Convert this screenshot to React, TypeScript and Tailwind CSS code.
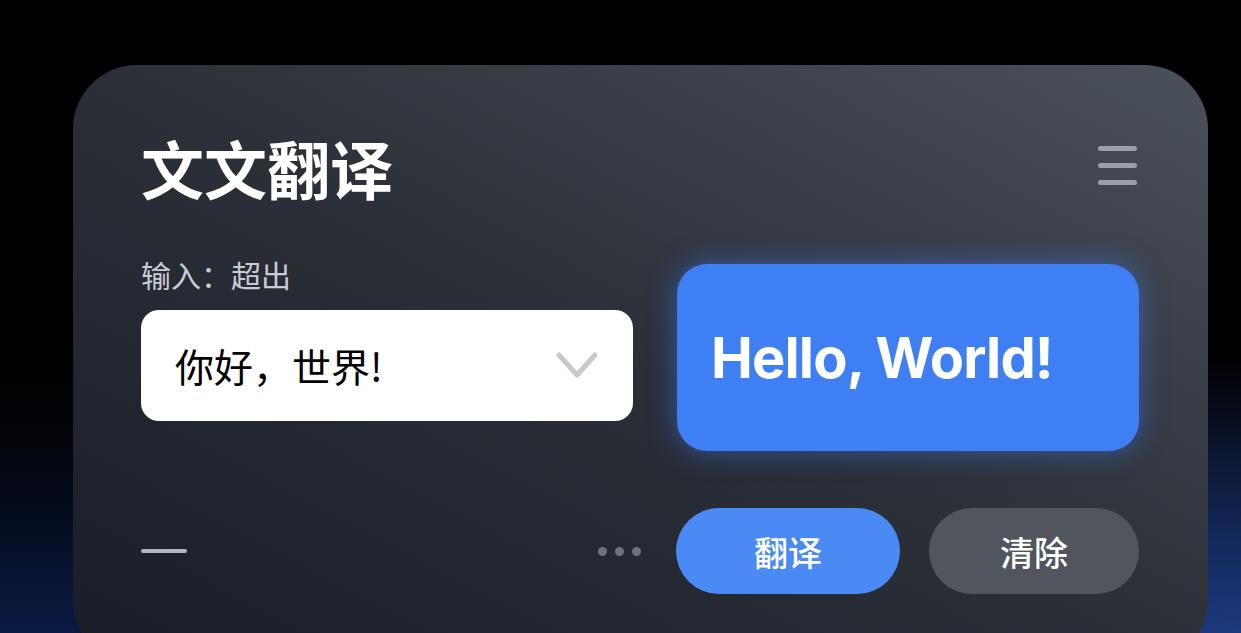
import React from "react";

const cjk = "font-['Noto_Sans_CJK_SC','Noto_Sans',sans-serif]";

function Chevron() {
    return (
        <svg width="44" height="30" viewBox="0 0 44 30" fill="none">
            <path d="M4 4 L22 24 L40 4" stroke="#c6c8cd" strokeWidth="5" strokeLinecap="round" strokeLinejoin="round" />
        </svg>
    );
}

export default function App() {
    return (
        <div className="relative w-full h-[633px] overflow-hidden bg-gradient-to-b from-black from-40% via-[#03050b] via-70% to-[#0a1a42]">
            <div className="absolute inset-x-0 bottom-0 h-[300px] bg-[radial-gradient(ellipse_at_100%_100%,rgba(35,70,150,0.7),transparent_65%)]" />

            <div className="relative pt-[65px] pl-[73px] pr-[33px]">
                <div className="h-[600px] rounded-[64px] bg-gradient-to-bl from-[#4b515b] via-[#2b2f38] to-[#1a1d27] pt-[70px] pl-[68px] pr-[69px]">
                    {/* header */}
                    <div className="flex items-center justify-between">
                        <h1 className={`${cjk} text-[63px] leading-none font-bold text-white`}>文文翻译</h1>
                        <div className="flex flex-col gap-[12px] mt-[-2px] mr-[2px]">
                            <span className="block w-[39px] h-[5px] rounded-sm bg-[#9aa0a9]" />
                            <span className="block w-[39px] h-[5px] rounded-sm bg-[#9aa0a9]" />
                            <span className="block w-[39px] h-[5px] rounded-sm bg-[#9aa0a9]" />
                        </div>
                    </div>

                    {/* main */}
                    <div className="grid grid-cols-[492px_1fr] gap-[44px] mt-[58px]">
                        <div>
                            <p className={`${cjk} text-[30px] leading-[36px] text-[#c9cdd3]`}>输入：超出</p>
                            <div className="mt-[18px] h-[111px] rounded-[18px] bg-white flex items-center justify-between pl-[34px] pr-[34px]">
                                <span className={`${cjk} text-[39px] font-normal text-black`}>你好，世界!</span>
                                <Chevron />
                            </div>
                        </div>
                        <div className="mt-[8px] h-[187px] rounded-[30px] bg-[#3f7ff4] shadow-[0_0_28px_rgba(60,120,245,0.55)] flex items-center pl-[34px]">
                            <span className="font-['Inter',sans-serif] text-[56px] font-bold tracking-[-0.015em] text-white">Hello, World!</span>
                        </div>
                    </div>

                    {/* bottom row */}
                    <div className="flex items-center mt-[57px]">
                        <div className="w-[500px] flex items-center justify-between">
                            <span className="block w-[46px] h-[4px] rounded-sm bg-[#b3b7bd]" />
                            <div className="flex gap-[8px]">
                                <span className="block w-[9px] h-[9px] rounded-full bg-[#6e737b]" />
                                <span className="block w-[9px] h-[9px] rounded-full bg-[#6e737b]" />
                                <span className="block w-[9px] h-[9px] rounded-full bg-[#6e737b]" />
                            </div>
                        </div>
                        <div className="ml-auto flex gap-[29px]">
                            <button className={`${cjk} w-[224px] h-[86px] rounded-full bg-[#4a8af4] text-white text-[34px] font-medium`}>翻译</button>
                            <button className={`${cjk} w-[210px] h-[86px] rounded-full bg-[#50555e] text-white text-[34px] font-medium`}>清除</button>
                        </div>
                    </div>
                </div>
            </div>
        </div>
    );
}
